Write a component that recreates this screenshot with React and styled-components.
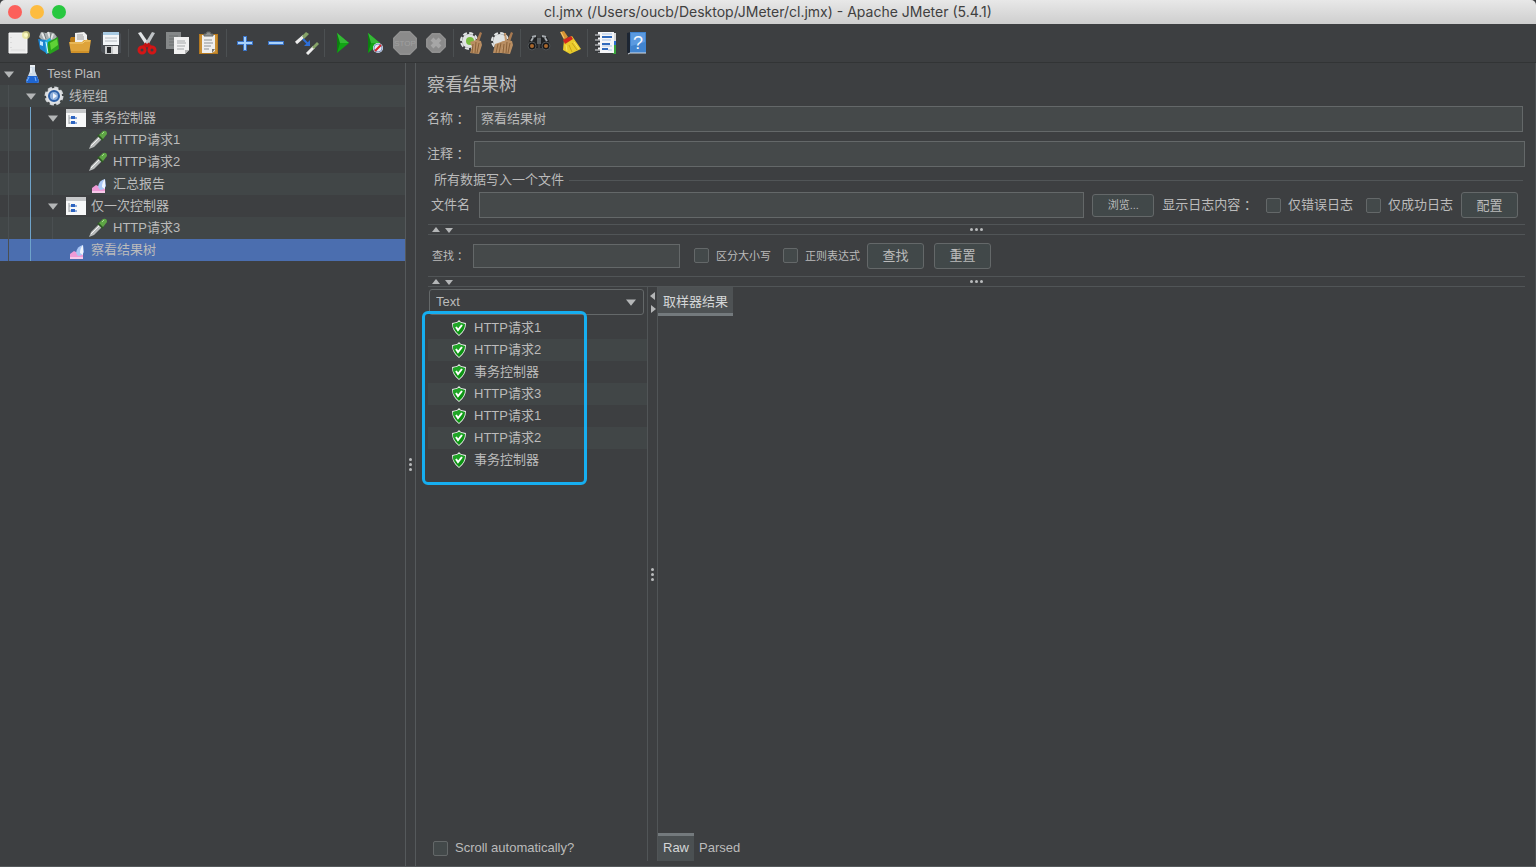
import React, {useState} from 'react'
import styled, {createGlobalStyle} from "styled-components"


const GlobalStyle = createGlobalStyle`
  * {
    box-sizing: border-box;
  }

  body {
    margin: 0;
    background: #3d3f41;
    color: #bbbbbb;
    font-family: "Liberation Sans", "Noto Sans CJK SC", sans-serif;
    font-size: 13px;
    line-height: 16px;
  }

  button, input, select {
    font-family: inherit;
    color: inherit;
    margin: 0;
  }

  ul {
    list-style: none;
    margin: 0;
    padding: 0;
  }

  svg {
    display: block;
    flex: none;
  }
`

/* ---------- toolbar icons ---------- */

const Svg = ({size = 24, children}) => (
	<svg width={size} height={size} viewBox={`0 0 ${size} ${size}`} fill="none" aria-hidden="true">{children}</svg>
)

const NewIcon = () => (
	<Svg>
		<path d="M3 2h18v20H3z" fill="#ececec" stroke="#fafafa"/>
		<path d="M5 19h14" stroke="#dcdcdc"/>
		<path d="M5 6v13" stroke="#c9c9c9" strokeDasharray="1 4"/>
		<circle cx="20" cy="4" r="4" fill="#e8e58a" opacity=".7"/>
		<circle cx="20" cy="4" r="2" fill="#fbfac5"/>
	</Svg>
)

const TemplatesIcon = () => (
	<Svg>
		<path d="M2 6l2-5 5 1 3-1 5 1 3 4-4 4H6z" fill="#a9afb0"/>
		<path d="M5 2l3 6M11 1l2 6M16 3l-2 5" stroke="#e4e6e6" strokeWidth="2"/>
		<path d="M7 2l2 6M14 2l-1 6" stroke="#747a7c"/>
		<path d="M1 8l8 1v13l-6-4z" fill="#1d83cf"/>
		<path d="M3 10l3 1v4l-3-1z" fill="#bfe8ff"/>
		<path d="M8 10l5-3 2 4-3 11-3 1z" fill="#1db3e0"/>
		<path d="M11 11l10-5 1 12-9 5-3-2z" fill="#28a31d"/>
		<path d="M13 12l7-4 1 6-7 5z" fill="#5fd236"/>
		<path d="M9 11l2 11" stroke="#e4f7ff"/>
	</Svg>
)

const OpenIcon = () => (
	<Svg>
		<path d="M2 8l1-2h5l2 2h10v12H3z" fill="#b97a16"/>
		<path d="M7 11V2l9-1 3 3v8z" fill="#f0f0f0"/>
		<path d="M9 4h6M9 6h7M9 8h7" stroke="#9b9b9b"/>
		<path d="M1 11h13l2-2h7l-2 13H3z" fill="#dea33a"/>
		<path d="M2 12h13l2-2h5" stroke="#f3cc74"/>
		<path d="M3 21h18" stroke="#c28018"/>
	</Svg>
)

const SaveIcon = () => (
	<Svg>
		<path d="M2 2h19l1 1v19H4l-2-2z" fill="#4a4e53"/>
		<path d="M4 1h16v13H4z" fill="#f3f6f8"/>
		<path d="M4 1h16v3H4z" fill="#a8cbe4"/>
		<path d="M6 7h12M6 10h12" stroke="#b6bcc2"/>
		<path d="M6 15h13v8H6z" fill="#c9cbcc"/>
		<path d="M8 16h4v6H8z" fill="#26282b"/>
		<path d="M14 15h5v8h-5z" fill="#e9e9e9"/>
	</Svg>
)

const CutIcon = () => (
	<Svg>
		<path d="M3 2l3-1 9 13-3 2z" fill="#e3e6e8"/>
		<path d="M20 2l-3-1-8 13 3 2z" fill="#bfc3c6"/>
		<path d="M12 13l-4 4M12 13l4 4" stroke="#c31212" strokeWidth="4"/>
		<ellipse cx="7" cy="19" rx="3" ry="3" stroke="#d31616" strokeWidth="3"/>
		<ellipse cx="17" cy="19" rx="3" ry="3" stroke="#d31616" strokeWidth="3"/>
	</Svg>
)

const CopyIcon = () => (
	<Svg>
		<path d="M0 1h15v17H0z" fill="#858889"/>
		<path d="M3 5h9M3 8h7M3 11h5M3 14h5" stroke="#6d7071"/>
		<path d="M8 6h15v13l-4 4H8z" fill="#f1f1f1"/>
		<path d="M23 19l-4 4v-4z" fill="#b5b5b5"/>
		<path d="M11 10h8M11 12h9M11 15h8M11 18h7" stroke="#a5a8aa"/>
	</Svg>
)

const PasteIcon = () => (
	<Svg>
		<path d="M2 3h19v20H2z" fill="#b67a20"/>
		<path d="M3 4h17v18H3z" fill="#c98f33"/>
		<path d="M5 4h13v16l-3 2H5z" fill="#efefef"/>
		<path d="M7 5V3h2l1-2h3l1 2h2v2z" fill="#8f9292" stroke="#646868"/>
		<path d="M7 9h8M7 12h9M7 15h7M7 18h5" stroke="#8e9192"/>
		<path d="M18 18l-3 4v-4z" fill="#76746d"/>
	</Svg>
)

const PlusIcon = () => (
	<Svg>
		<path d="M12 5v15M4 12h16" stroke="#3a72c4" strokeWidth="4"/>
		<path d="M12 6v13M5 12h14" stroke="#a9d2fb" strokeWidth="2"/>
	</Svg>
)

const MinusIcon = () => (
	<Svg>
		<path d="M4 12h16" stroke="#3a72c4" strokeWidth="4"/>
		<path d="M5 12h14" stroke="#a9d2fb" strokeWidth="2"/>
	</Svg>
)

const ToggleIcon = () => (
	<Svg>
		<path d="M1 12l8-7" stroke="#ededed" strokeWidth="3"/>
		<path d="M7 5l4-4 3 2-5 5z" fill="#86a368"/>
		<path d="M12 23l7-7" stroke="#ededed" strokeWidth="3"/>
		<path d="M17 16l5-5 2 2-5 5z" fill="#86a368"/>
		<path d="M8 8l5 5" stroke="#2e6fd8" strokeWidth="2"/>
		<path d="M15 9v6H9z" fill="#2e6fd8"/>
	</Svg>
)

const Play = () => (
	<>
		<path d="M6 2l12 10L6 22z" fill="#11a414"/>
		<path d="M6 2l12 10H6z" fill="#35b836"/>
		<path d="M6 2v20l3-10z" fill="#0c7e10"/>
	</>
)

const StartIcon = () => <Svg><Play/></Svg>

const StartNoPauseIcon = () => (
	<Svg>
		<Play/>
		<circle cx="16" cy="17" r="5" fill="#e6ebf5"/>
		<circle cx="16" cy="17" r="4" stroke="#7a93c4"/>
		<path d="M13 20l6-6" stroke="#d42424" strokeWidth="2"/>
	</Svg>
)

const StopIcon = () => (
	<Svg>
		<path d="M7 0h10l7 7v10l-7 7H7l-7-7V7z" fill="#8b8b8b"/>
		<path d="M7 1h10l6 6v10l-6 6H7l-6-6V7z" stroke="#939393"/>
		<text x="12" y="15" textAnchor="middle" fontSize="8" fill="#a0a0a0">STOP</text>
	</Svg>
)

const ShutdownIcon = () => (
	<Svg>
		<path d="M8 2h8l6 6v8l-6 6H8l-6-6V8z" fill="#8b8b8b"/>
		<path d="M8 3h8l5 5v8l-5 5H8l-5-5V8z" stroke="#939393"/>
		<path d="M8 8l8 8M16 8l-8 8" stroke="#a6a6a6" strokeWidth="4"/>
	</Svg>
)

const Cog = () => (
	<>
		<circle cx="9" cy="10" r="8" stroke="#e0e3e3" strokeWidth="2" strokeDasharray="4 2.28"/>
		<circle cx="9" cy="10" r="7" fill="#e0e3e3"/>
	</>
)

const Brush = () => (
	<>
		<path d="M20 1l2 1-3 9-3-1z" fill="#a87950"/>
		<path d="M10 11l6-2 5 1 1 4-3 9-9-1 2-6z" fill="#b98e62"/>
		<path d="M13 13l-1 9M16 11l-1 11M19 12l-2 10" stroke="#8b6239"/>
	</>
)

const ClearIcon = () => (
	<Svg>
		<Cog/>
		<circle cx="10" cy="10" r="4" fill="#78bd3f"/>
		<Brush/>
	</Svg>
)

const ClearAllIcon = () => (
	<Svg>
		<Cog/>
		<path d="M14 2l1 8" stroke="#c59a70" strokeWidth="2"/>
		<path d="M4 13l9-3-2 12H2z" fill="#b98e62"/>
		<path d="M7 13L5 22M10 12L8 22" stroke="#8b6239"/>
		<Brush/>
	</Svg>
)

const SearchIcon = () => (
	<Svg>
		<path d="M4 6l6-1 1 12H1l1-7z" fill="#202224"/>
		<path d="M20 6l-6-1-1 12h10l-1-7z" fill="#202224"/>
		<path d="M10 7h4v6h-4z" fill="#5d6265"/>
		<path d="M5 6l4-1M19 6l-4-1M4 10l2-3M20 10l-2-3" stroke="#a5aaae" strokeWidth="2"/>
		<circle cx="5" cy="15" r="4" fill="#17181a" stroke="#4f5457"/>
		<circle cx="19" cy="15" r="4" fill="#17181a" stroke="#4f5457"/>
		<circle cx="5" cy="15" r="2" fill="#a8672c"/>
		<circle cx="19" cy="15" r="2" fill="#a8672c"/>
	</Svg>
)

const BroomIcon = () => (
	<Svg>
		<path d="M2 1l4-1 4 6-4 3z" fill="#d99432"/>
		<path d="M3 1l3 6" stroke="#f4c878"/>
		<path d="M6 9l8-4 9 13-11 5-7-4z" fill="#e9cb2b"/>
		<path d="M5 9l8-4 2 3-8 5z" fill="#d1261f"/>
		<path d="M11 14l3 7M14 12l5 7" stroke="#c7a51a"/>
		<path d="M8 14l1 6M16 11l5 7" stroke="#f7e560"/>
	</Svg>
)

const FunctionIcon = () => (
	<Svg>
		<path d="M19 5h3v18h-3z" fill="#38a53c"/>
		<path d="M19 2h3v8h-3z" fill="#dadada"/>
		<path d="M19 10h3v4h-3z" fill="#2b6fd0"/>
		<path d="M4 1h16v21H4z" fill="#f5f6f8"/>
		<path d="M8 6h10M8 13h8M8 18h6" stroke="#2f69bd" strokeWidth="2"/>
		<path d="M8 3h10M8 9h9M8 15h10M14 19h4" stroke="#a9c3e6"/>
		<path d="M6 5H1M6 10H1M6 15H1M6 20H1" stroke="#34373a" strokeWidth="3"/>
		<path d="M6 4H1M6 9H1M6 14H1M6 19H1" stroke="#e2e4e6"/>
	</Svg>
)

const HelpIcon = () => (
	<Svg>
		<path d="M2 2l4-1v21l-3 1-1-2z" fill="#1c2532"/>
		<path d="M5 1h16v21H5z" fill="#4184cf"/>
		<path d="M6 2h14v9L6 15z" fill="#5b9ae0"/>
		<path d="M3 23l2-1h16" stroke="#d6dbe2"/>
		<text x="13" y="18" textAnchor="middle" fontSize="18" fill="#f3f7fc">?</text>
	</Svg>
)

/* ---------- tree icons ---------- */

const FlaskIcon = () => (
	<Svg size={20}>
		<path d="M8 2h5v5l4 10q0 2-2 2H6q-2 0-2-2L8 7z" fill="#cfdce9"/>
		<path d="M6 12h9l2 5q0 2-2 2H6q-2 0-2-2z" fill="#1f66d2"/>
		<path d="M7 13l-2 4M13 13l1 4" stroke="#7db6ff"/>
		<path d="M8 1h5v2H8z" fill="#e9eef2"/>
		<path d="M9 4v5" stroke="#fff"/>
	</Svg>
)

const GearIcon = () => (
	<Svg size={20}>
		<circle cx="10" cy="10" r="8" stroke="#d4d7da" strokeWidth="3" strokeDasharray="4 2.28"/>
		<circle cx="10" cy="10" r="8" fill="#dfe1e3"/>
		<circle cx="10" cy="10" r="5" fill="#8fb0dc" stroke="#2c5fa6" strokeWidth="2"/>
		<path d="M9 7l4 3-4 3z" fill="#f1f5fb"/>
	</Svg>
)

const ControllerIcon = () => (
	<Svg size={20}>
		<path d="M0 1h20v18H0z" fill="#f7f8f9"/>
		<path d="M0 1h20v4H0z" fill="#c6c8ca"/>
		<path d="M3 7v9M3 10h3M3 15h3" stroke="#9aa0a6"/>
		<path d="M5 8h4v3H5zM5 13h4v3H5z" fill="#2c63c0"/>
		<path d="M9 10h2M9 15h2" stroke="#2c63c0"/>
	</Svg>
)

const PipetteIcon = () => (
	<Svg size={20}>
		<path d="M1 19l2-5 8-8 3 3-8 8z" fill="#b9bcbc"/>
		<path d="M3 16l8-8" stroke="#f4f4f4"/>
		<path d="M10 5l5 5" stroke="#2c5b20" strokeWidth="2"/>
		<path d="M11 5l4-4q4-1 4 3l-4 5z" fill="#5ea645"/>
		<path d="M14 4l2-2" stroke="#a9dd90"/>
	</Svg>
)

const ListenerIcon = () => (
	<Svg size={20}>
		<path d="M4 14l4-3 4 2 5-5v10H4z" fill="#ef9ad6"/>
		<path d="M4 17h13v2H4z" fill="#f7c9ea"/>
		<path d="M10 13q1-7 7-8l1 7q-2 4-6 4z" fill="#a9c6f5"/>
		<path d="M14 13q0-5 3-8v10z" fill="#f1f5fd"/>
	</Svg>
)

const ShieldIcon = () => (
	<Svg size={16}>
		<path d="M8 0l2 2 5 1q0 8-7 13Q1 11 1 3l5-1z" fill="#e6ebe6"/>
		<path d="M8 2l2 1 4 1q0 6-6 11Q2 10 2 4l4-1z" fill="#0d9413"/>
		<path d="M8 2L6 3 2 4q0 3 1 5l10-4V4l-3-1z" fill="#1fa526"/>
		<path d="M5 7l2 3 4-5" stroke="#fff" strokeWidth="2"/>
	</Svg>
)

const Arrow = ({dir, big}) => {
	const paths = {
		up: "M0 6h8L4 1z",
		down: "M0 2h8L4 7z",
		left: "M6 0v8L1 4z",
		right: "M2 0v8l5-4z"
	}
	return (
		<svg width={big ? 10 : 8} height={big ? 10 : 8} viewBox="0 0 8 8" aria-hidden="true">
			<path d={paths[dir]} fill="#b4b6b7"/>
		</svg>
	)
}

const toolbarGroups = [
	[["New", NewIcon], ["Templates", TemplatesIcon], ["Open", OpenIcon], ["Save", SaveIcon]],
	[["Cut", CutIcon], ["Copy", CopyIcon], ["Paste", PasteIcon]],
	[["Expand all", PlusIcon], ["Collapse all", MinusIcon], ["Toggle", ToggleIcon]],
	[["Start", StartIcon], ["Start no pauses", StartNoPauseIcon], ["Stop", StopIcon], ["Shutdown", ShutdownIcon]],
	[["Clear", ClearIcon], ["Clear all", ClearAllIcon]],
	[["Search", SearchIcon], ["Reset search", BroomIcon]],
	[["Function helper", FunctionIcon], ["Help", HelpIcon]]
]

const treeData = [
	{id: 1, level: 0, label: "Test Plan", icon: FlaskIcon, open: true},
	{id: 2, level: 1, label: "线程组", icon: GearIcon, open: true},
	{id: 3, level: 2, label: "事务控制器", icon: ControllerIcon, open: true},
	{id: 4, level: 3, label: "HTTP请求1", icon: PipetteIcon},
	{id: 5, level: 3, label: "HTTP请求2", icon: PipetteIcon},
	{id: 6, level: 3, label: "汇总报告", icon: ListenerIcon},
	{id: 7, level: 2, label: "仅一次控制器", icon: ControllerIcon, open: true},
	{id: 8, level: 3, label: "HTTP请求3", icon: PipetteIcon},
	{id: 9, level: 2, label: "察看结果树", icon: ListenerIcon}
]

const results = ["HTTP请求1", "HTTP请求2", "事务控制器", "HTTP请求3", "HTTP请求1", "HTTP请求2", "事务控制器"]


const Splitter = () => (
	<Divider>
		<Arrows><Arrow dir="up"/><Arrow dir="down"/></Arrows>
		<Dots><i/><i/><i/></Dots>
	</Divider>
)

const App = () => {
	const [selected, setSelected] = useState(9)
	const [name, setName] = useState("察看结果树")

	return (
		<Window>
			<GlobalStyle/>
			<TitleBar>
				<Lights>
					<Light $color="#fc605b" aria-label="Close"/>
					<Light $color="#fdbc40" aria-label="Minimize"/>
					<Light $color="#28c840" aria-label="Zoom"/>
				</Lights>
				<WindowTitle>cl.jmx (/Users/oucb/Desktop/JMeter/cl.jmx) - Apache JMeter (5.4.1)</WindowTitle>
			</TitleBar>
			<Toolbar>
				{toolbarGroups.map((group, index) => (
					<ToolGroup key={index}>
						{group.map(([label, Icon]) => (
							<ToolButton key={label} type="button" aria-label={label}><Icon/></ToolButton>
						))}
					</ToolGroup>
				))}
			</Toolbar>
			<Body>
				<Tree>
					{treeData.map(({id, level, label, icon: Icon, open}) => (
						<TreeRow key={id} $selected={id === selected} onClick={() => setSelected(id)}>
							{Array.from({length: level}, (_, i) => <Guide key={i} $active={i === 1}/>)}
							<TreeToggle>{open && <Arrow dir="down" big/>}</TreeToggle>
							<TreeIcon><Icon/></TreeIcon>
							<span>{label}</span>
						</TreeRow>
					))}
				</Tree>
				<VerticalSplit><Dots $vertical><i/><i/><i/></Dots></VerticalSplit>
				<Main>
					<Heading>察看结果树</Heading>
					<FieldRow $inset>
						<label htmlFor="name">名称 ：</label>
						<TextInput id="name" value={name} onChange={(e) => setName(e.target.value)}/>
					</FieldRow>
					<FieldRow>
						<label htmlFor="comment">注释 ：</label>
						<TextInput id="comment"/>
					</FieldRow>
					<GroupTitle>所有数据写入一个文件</GroupTitle>
					<FileRow>
						<label htmlFor="file">文件名</label>
						<TextInput id="file"/>
						<Button type="button" $small>浏览...</Button>
						<span>显示日志内容 ：</span>
						<Check><input type="checkbox"/>仅错误日志</Check>
						<Check><input type="checkbox"/>仅成功日志</Check>
						<Button type="button">配置</Button>
					</FileRow>
					<Splitter/>
					<SearchRow>
						<SmallLabel htmlFor="search">查找 ：</SmallLabel>
						<SearchInput id="search"/>
						<Check $small><input type="checkbox"/>区分大小写</Check>
						<Check $small><input type="checkbox"/>正则表达式</Check>
						<Button type="button">查找</Button>
						<Button type="button">重置</Button>
					</SearchRow>
					<Splitter/>
					<ResultArea>
						<ResultPane>
							<SelectBox>
								<select aria-label="Renderer"><option>Text</option></select>
								<Arrow dir="down" big/>
							</SelectBox>
							<ResultList>
								{results.map((item, index) => (
									<ResultRow key={index}><ShieldIcon/>{item}</ResultRow>
								))}
								<Highlight/>
							</ResultList>
							<ScrollCheck><input type="checkbox"/>Scroll automatically?</ScrollCheck>
						</ResultPane>
						<InnerSplit>
							<SideArrows><Arrow dir="left"/><Arrow dir="right"/></SideArrows>
							<Dots $vertical><i/><i/><i/></Dots>
						</InnerSplit>
						<DetailPane>
							<Tab type="button">取样器结果</Tab>
							<DetailBody/>
							<BottomTabs>
								<BottomTab type="button" $active>Raw</BottomTab>
								<BottomTab type="button">Parsed</BottomTab>
							</BottomTabs>
						</DetailPane>
					</ResultArea>
				</Main>
			</Body>
		</Window>
	)
}

export default App

const Window = styled.div`
  display: flex;
  flex-direction: column;
  min-height: 100vh;
  background: #3d3f41;
  border-bottom: 1px solid #55595b;
`

const TitleBar = styled.header`
  display: grid;
  grid-template-columns: 1fr auto 1fr;
  align-items: center;
  height: 24px;
  padding: 0 8px;
  background: linear-gradient(#e8e8e8, #cecece);
  border-radius: 5px 5px 0 0;
`

const Lights = styled.div`
  display: flex;
  gap: 8px;
`

const Light = styled.button`
  width: 14px;
  height: 14px;
  padding: 0;
  border: none;
  border-radius: 50%;
  background: ${({$color}) => $color};
`

const WindowTitle = styled.div`
  color: #404040;
  font-family: Inter, sans-serif;
  font-size: 14px;
`

const Toolbar = styled.nav`
  display: flex;
  align-items: center;
  height: 39px;
  padding-left: 2px;
  border-bottom: 1px solid #323435;
`

const ToolGroup = styled.div`
  display: flex;

  & + & {
    margin-left: 2px;
    padding-left: 2px;
    border-left: 1px solid #4c5052;
  }
`

const ToolButton = styled.button`
  display: flex;
  align-items: center;
  justify-content: center;
  width: 31px;
  height: 28px;
  padding: 0;
  border: none;
  background: transparent;
`

const Body = styled.div`
  display: flex;
  flex: 1;
`

const Tree = styled.ul`
  width: 405px;
  flex: none;
`

const TreeRow = styled.li`
  display: flex;
  align-items: center;
  height: 22px;
  background: ${({$selected}) => $selected ? "#4b6eaf" : "transparent"};

  &:nth-child(even) {
    background: ${({$selected}) => $selected ? "#4b6eaf" : "#414647"};
  }
`

const Guide = styled.span`
  align-self: stretch;
  width: 14px;
  margin-left: 8px;
  border-left: 1px solid ${({$active}) => $active ? "#6fa3c9" : "#4a4f51"};
`

const TreeToggle = styled.span`
  width: 18px;
  padding-left: 4px;
`

const TreeIcon = styled.span`
  display: flex;
  justify-content: center;
  width: 28px;
  margin-right: 1px;
`

const VerticalSplit = styled.div`
  display: flex;
  align-items: center;
  justify-content: center;
  width: 11px;
  flex: none;
  border: solid #55595b;
  border-width: 0 1px;
`

const Dots = styled.span`
  display: flex;
  flex-direction: ${({$vertical}) => $vertical ? "column" : "row"};
  gap: 2px;

  i {
    width: 3px;
    height: 3px;
    border-radius: 50%;
    background: #b9bbbc;
  }
`

const Main = styled.main`
  display: flex;
  flex-direction: column;
  flex: 1;
  min-width: 0;
  padding: 10px 10px 5px 11px;
  border-right: 1px solid #4b4f51;
`

const Heading = styled.h1`
  margin: 0 0 9px;
  font-size: 18px;
  font-weight: 400;
  line-height: 24px;
`

const FieldRow = styled.div`
  display: flex;
  align-items: center;
  margin-bottom: 9px;
  padding-right: ${({$inset}) => $inset ? "2px" : "0"};

  label {
    width: ${({$inset}) => $inset ? "49px" : "47px"};
  }
`

const TextInput = styled.input`
  flex: 1;
  min-width: 0;
  height: 26px;
  padding: 0 4px 3px;
  background: #45494a;
  border: 1px solid #646869;
  font-size: 13px;
`

const GroupTitle = styled.h2`
  display: flex;
  align-items: center;
  margin: -4px 2px 4px 7px;
  font-size: 13px;
  font-weight: 400;

  &::after {
    content: "";
    flex: 1;
    margin-left: 5px;
    border-top: 1px solid #515557;
  }
`

const FileRow = styled.div`
  display: flex;
  align-items: center;
  padding: 0 7px 0 4px;
  margin-bottom: 6px;

  label[for="file"] {
    margin-right: 9px;
  }

  button {
    margin: 0 8px;
  }

  button:last-child {
    margin-right: 0;
  }

  span {
    margin-right: 9px;
  }

  label + label {
    margin-left: 13px;
  }
`

const Button = styled.button`
  width: ${({$small}) => $small ? "62px" : "57px"};
  height: ${({$small}) => $small ? "23px" : "26px"};
  padding: 0 0 2px;
  border: 1px solid #646869;
  border-radius: 3px;
  background: #414849;
  font-size: ${({$small}) => $small ? "11px" : "13px"};
`

const Check = styled.label`
  display: flex;
  align-items: center;
  gap: 7px;
  font-size: ${({$small}) => $small ? "11px" : "13px"};

  input {
    appearance: none;
    width: 15px;
    height: 15px;
    border: 1px solid #646869;
    border-radius: 2px;
    background: #43494a;
  }

  input:checked {
    background: #8b8f91;
  }
`

const Divider = styled.div`
  display: grid;
  grid-template-columns: 1fr auto 1fr;
  align-items: center;
  height: 11px;
  margin-left: 1px;
  border: solid #515557;
  border-width: 1px 0;
`

const Arrows = styled.span`
  display: flex;
  gap: 5px;
  padding-left: 4px;
`

const SearchRow = styled.div`
  display: flex;
  align-items: center;
  height: 41px;
  padding-left: 5px;

  label + label {
    margin: 0 7px 0 12px;
  }

  button + button {
    margin-left: 10px;
  }
`

const SmallLabel = styled.label`
  width: 41px;
  font-size: 11px;
`

const SearchInput = styled(TextInput)`
  flex: none;
  width: 207px;
  height: 24px;
  margin-right: 14px;
`

const ResultArea = styled.div`
  display: flex;
  flex: 1;
  margin-left: 1px;
`

const ResultPane = styled.section`
  display: flex;
  flex-direction: column;
  width: 219px;
  padding-top: 2px;
`

const SelectBox = styled.div`
  display: flex;
  align-items: center;
  width: 215px;
  margin-left: 1px;
  border: 1px solid #646869;
  border-radius: 3px;

  select {
    flex: 1;
    height: 24px;
    padding: 0 6px 2px;
    appearance: none;
    border: none;
    background: transparent;
    font-size: 13px;
  }

  svg {
    margin-right: 7px;
  }
`

const ResultList = styled.ul`
  position: relative;
  margin-top: 2px;
`

const ResultRow = styled.li`
  display: flex;
  align-items: center;
  gap: 7px;
  height: 22px;
  padding-left: 23px;

  &:nth-child(even) {
    background: #414647;
  }
`

/* annotation frame drawn over the list */
const Highlight = styled.div`
  position: absolute;
  top: -6px;
  left: -6px;
  width: 165px;
  bottom: -14px;
  border: 3px solid #16aef0;
  border-radius: 6px;
  pointer-events: none;
`

const ScrollCheck = styled(Check)`
  margin: auto 0 5px 5px;
`

const InnerSplit = styled.div`
  display: grid;
  grid-template-rows: 1fr auto 1fr;
  justify-items: center;
  width: 11px;
  border: solid #515557;
  border-width: 0 1px;
`

const SideArrows = styled.span`
  display: flex;
  flex-direction: column;
  gap: 5px;
  padding-top: 5px;
`

const DetailPane = styled.section`
  display: flex;
  flex-direction: column;
  align-items: flex-start;
  flex: 1;
`

const Tab = styled.button`
  height: 29px;
  padding: 0 5px;
  border: none;
  border-bottom: 3px solid #747a7d;
  background: #4e5254;
  color: #d5d7d8;
  font-size: 13px;
`

const DetailBody = styled.div`
  flex: 1;
`

const BottomTabs = styled.div`
  display: flex;
`

const BottomTab = styled.button`
  height: 28px;
  padding: 0 5px 2px;
  border: none;
  border-top: 3px solid ${({$active}) => $active ? "#747a7d" : "transparent"};
  background: ${({$active}) => $active ? "#4b5052" : "transparent"};
  color: ${({$active}) => $active ? "#d5d7d8" : "#bbbbbb"};
  font-size: 13px;
`
